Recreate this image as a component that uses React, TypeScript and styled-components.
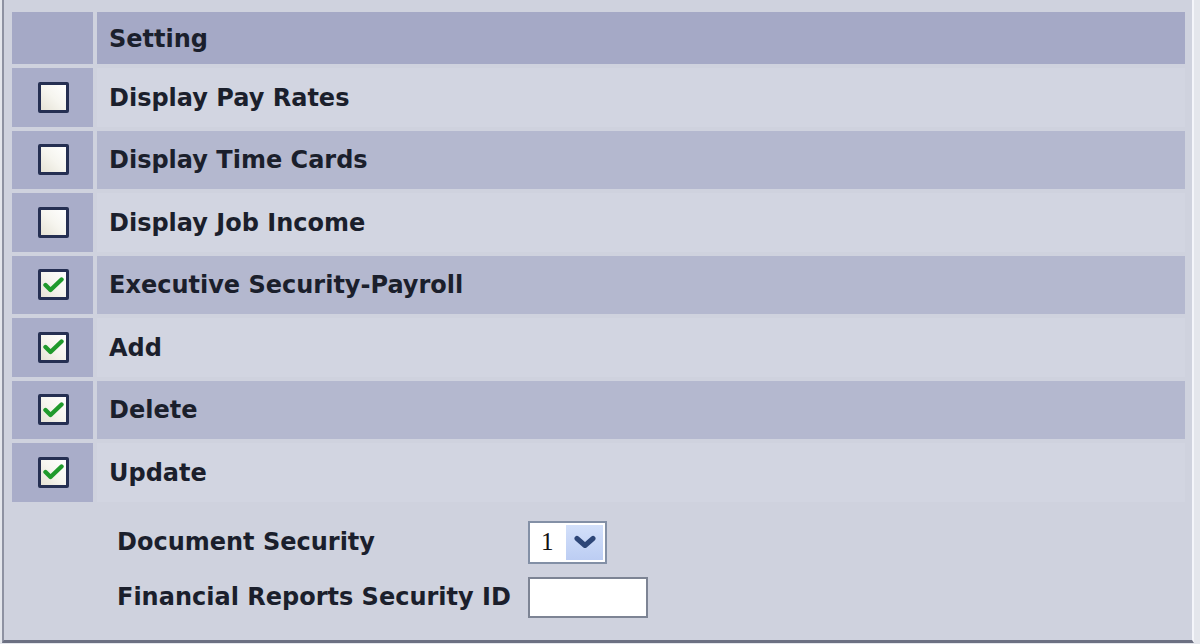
import React from 'react';
import styled, { createGlobalStyle } from 'styled-components';

const GlobalStyle = createGlobalStyle`
  html, body {
    margin: 0;
    padding: 0;
    background: #e4e6ec;
  }
  body {
    font-family: "DejaVu Sans", sans-serif;
  }
`;

const settings = [
  { label: 'Display Pay Rates', checked: false },
  { label: 'Display Time Cards', checked: false },
  { label: 'Display Job Income', checked: false },
  { label: 'Executive Security-Payroll', checked: true },
  { label: 'Add', checked: true },
  { label: 'Delete', checked: true },
  { label: 'Update', checked: true },
];

export default function App() {
  return (
    <>
      <GlobalStyle />
      <Panel>
        <Table>
          <Row>
            <BoxCell $head />
            <LabelCell $tone="head">Setting</LabelCell>
          </Row>
          {settings.map((s, i) => (
            <Row key={s.label}>
              <BoxCell>
                <Check $checked={s.checked}>
                  {s.checked && (
                    <svg width="21" height="18" viewBox="0 0 21 18">
                      <path
                        d="M2.5 9 L7.5 14 L18.5 3.5"
                        fill="none"
                        stroke="#1f9a2c"
                        strokeWidth="4.4"
                        strokeLinecap="round"
                        strokeLinejoin="round"
                      />
                    </svg>
                  )}
                </Check>
              </BoxCell>
              <LabelCell $tone={i % 2 === 1 ? 'dark' : 'light'}>{s.label}</LabelCell>
            </Row>
          ))}
        </Table>
        <Form>
          <FormRow>
            <FormLabel>Document Security</FormLabel>
            <Select>
              <SelectValue>1</SelectValue>
              <SelectButton>
                <svg width="24" height="14" viewBox="0 0 24 14">
                  <path
                    d="M4 3.5 L12 10.5 L20 3.5"
                    fill="none"
                    stroke="#2d4678"
                    strokeWidth="5"
                    strokeLinecap="round"
                    strokeLinejoin="round"
                  />
                </svg>
              </SelectButton>
            </Select>
          </FormRow>
          <FormRow>
            <FormLabel>Financial Reports Security ID</FormLabel>
            <TextInput />
          </FormRow>
        </Form>
      </Panel>
    </>
  );
}

const Panel = styled.div`
  box-sizing: border-box;
  margin-left: 2px;
  width: 1192px;
  height: 643px;
  background: #cfd2de;
  border-left: 2px solid #8e92a2;
  border-right: 2px solid #f4f5fa;
  border-bottom: 3px solid #6c7082;
  padding: 12px 7px 0 8px;
`;

const Table = styled.div`
  display: flex;
  flex-direction: column;
  gap: 4px;
`;

const Row = styled.div`
  display: flex;
  gap: 4px;
  height: 58.5px;
  &:first-child {
    height: 52px;
  }
`;

const BoxCell = styled.div<{ $head?: boolean }>`
  width: 81px;
  flex-shrink: 0;
  background: ${(p) => (p.$head ? '#a5a9c6' : '#a9adc9')};
  display: flex;
  align-items: center;
  justify-content: center;
`;

const tones: Record<string, string> = {
  head: '#a5a9c6',
  dark: '#b4b8cf',
  light: '#d2d5e1',
};

const LabelCell = styled.div<{ $tone: string }>`
  flex: 1;
  background: ${(p) => tones[p.$tone]};
  display: flex;
  align-items: center;
  padding-left: 12px;
  padding-top: 1px;
  font-size: 24px;
  font-weight: bold;
  color: #1b1f2c;
`;

const Check = styled.div<{ $checked: boolean }>`
  box-sizing: border-box;
  width: 31px;
  height: 31px;
  margin-left: 2px;
  border: 3px solid #252f52;
  border-radius: 2px;
  background: linear-gradient(45deg, #e6e3d6 0%, #f6f5ef 50%, #ffffff 100%);
  display: flex;
  align-items: center;
  justify-content: center;
`;

const Form = styled.div`
  display: flex;
  flex-direction: column;
  gap: 13px;
  padding: 19px 0 0 105px;
`;

const FormRow = styled.div`
  display: flex;
  align-items: center;
`;

const FormLabel = styled.div`
  width: 411px;
  font-size: 24px;
  font-weight: bold;
  color: #1b1f2c;
`;

const Select = styled.div`
  box-sizing: border-box;
  width: 79px;
  height: 43px;
  background: #ffffff;
  border: 2px solid #8390a6;
  display: flex;
  align-items: center;
  justify-content: space-between;
  padding: 2px;
`;

const SelectValue = styled.span`
  font-family: "Liberation Serif", serif;
  font-size: 25px;
  color: #111;
  padding-left: 9px;
`;

const SelectButton = styled.div`
  width: 37px;
  height: 100%;
  background: linear-gradient(180deg, #d3e0fa 0%, #bccdf3 100%);
  display: flex;
  align-items: center;
  justify-content: center;
`;

const TextInput = styled.input`
  box-sizing: border-box;
  width: 120px;
  height: 41px;
  background: #ffffff;
  border: 2px solid #7d8494;
  outline: none;
`;
